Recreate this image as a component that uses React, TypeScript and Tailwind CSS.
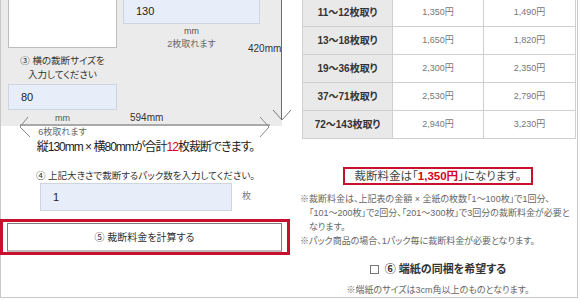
import React from 'react';

const rows = [
  ['11〜12枚取り', '1,350円', '1,490円'],
  ['13〜18枚取り', '1,650円', '1,820円'],
  ['19〜36枚取り', '2,300円', '2,350円'],
  ['37〜71枚取り', '2,530円', '2,790円'],
  ['72〜143枚取り', '2,940円', '3,230円'],
];

const SizeInput: React.FC<{ value: string; className: string }> = ({ value, className }) => (
  <div className={`flex items-center pl-[12px] bg-[#e7edf9] border border-[#cdd5e3] text-[11px] text-[#222] ${className}`}>
    {value}
  </div>
);

const App: React.FC = () => {
  return (
    <div className="w-[580px] h-[300px] overflow-hidden bg-white text-[#333] font-['Liberation_Sans','Noto_Sans_CJK_JP',sans-serif] [font-feature-settings:'palt']">
      <div className="flex w-[578px] h-[298px] border-l border-r border-b border-[#c8c8c8]">
        {/* left: paper diagram + inputs */}
        <div className="w-[289px] shrink-0 flex flex-col">
          <div className="relative -mt-[14px] h-[140px] w-[281px] bg-[#ebebeb]">
            <div className="flex pl-[7px] pt-[4px]">
              <div className="w-[109px] flex flex-col">
                <div className="h-[58px] bg-white border border-[#bdbdbd]" />
                <div className="mt-[6px] text-center text-[9.5px] leading-[14px] text-[#333]">
                  ③ 横の裁断サイズを
                  <br />
                  入力してください
                </div>
                <SizeInput value="80" className="mt-[2px] h-[26px]" />
                <div className="mt-[2px] text-center text-[9px] leading-[12px] text-[#555]">mm</div>
              </div>
              <div className="ml-[6px] w-[137px] pt-[8px] flex flex-col">
                <SizeInput value="130" className="h-[26px]" />
                <div className="mt-[1px] text-center text-[9px] leading-[12px] text-[#555]">mm</div>
                <div className="mt-[1px] text-center text-[9px] leading-[12px] text-[#666]">2枚取れます</div>
              </div>
            </div>

            {/* dimension arrows */}
            <div className="absolute left-[247px] top-[57px] text-[10px] leading-[12px] font-medium text-[#333]">420mm</div>
            <div className="absolute left-[280px] top-0 w-px h-[134px] bg-[#6b6b6b]" />
            <svg className="absolute left-[270px] top-[123px] w-[22px] h-[12px]" viewBox="0 0 22 12" fill="none" stroke="#777" strokeWidth="1">
              <path d="M2 1 L11 11 L20 1" />
            </svg>
            <div className="absolute left-[19px] bottom-0 w-[250px] h-[2px] bg-[#a9a9a9]" />
            <svg className="absolute left-[16px] top-[129px] w-[14px] h-[24px]" viewBox="0 0 14 24" fill="none" stroke="#888" strokeWidth="1">
              <path d="M11 2 L3 12 L13 22" />
            </svg>
            <svg className="absolute left-[256px] top-[129px] w-[14px] h-[24px]" viewBox="0 0 14 24" fill="none" stroke="#888" strokeWidth="1">
              <path d="M3 2 L12 12 L3 22" />
            </svg>
            <div className="absolute left-[129px] top-[126px] text-[10px] leading-[12px] font-medium text-[#333]">594mm</div>
          </div>

          <div className="pl-[7px]">
            <div className="w-[109px] text-center text-[9px] leading-[12px] text-[#666]">6枚取れます</div>
          </div>

          <div className="mt-[1px] text-center text-[12px] leading-[16px] text-[#222] tracking-[-1px]">
            縦130mm × 横80mmが合計<span className="text-[#d0021b]">12</span>枚裁断できます。
          </div>

          <div className="mt-[14px] text-center text-[9.5px] leading-[14px] text-[#333]">
            ④ 上記大きさで裁断するパック数を入力してください。
          </div>

          <div className="flex items-center pl-[39px]">
            <SizeInput value="1" className="w-[192px] h-[28px]" />
            <span className="ml-[10px] text-[9px] text-[#777]">枚</span>
          </div>

          <div className="mt-[8px] -ml-px w-[290px] border-[3px] border-[#c8102e] pt-px pl-[4px] pr-[5px]">
            <button className="w-full h-[29px] bg-white border border-[#7d7d7d] border-b-2 border-b-[#bdbdbd] text-[10px] text-[#333]">
              ⑤ 裁断料金を計算する
            </button>
          </div>
        </div>

        {/* right: price table + notes */}
        <div className="flex-1 flex flex-col pl-[10px] pr-[2px]">
          <div className="-mt-[2px] ml-[2px] border-t border-l border-[#cfcfcf]">
            {rows.map((r) => (
              <div key={r[0]} className="grid grid-cols-[90px_91px_92px] h-[28px] border-b border-[#cfcfcf]">
                <div className="flex items-center justify-center bg-[#e9e9e9] border-r border-[#cfcfcf] text-[10px] font-bold text-[#333]">
                  {r[0]}
                </div>
                <div className="flex items-center justify-center border-r border-[#cfcfcf] text-[9px] text-[#777]">{r[1]}</div>
                <div className="flex items-center justify-center border-r border-[#cfcfcf] text-[9px] text-[#777]">{r[2]}</div>
              </div>
            ))}
          </div>

          <div className="mt-[28px] flex justify-center">
            <div className="h-[18px] px-[10px] flex items-center border-2 border-[#c8102e] text-[11.5px] leading-[14px] text-[#444]">
              裁断料金は「<span className="font-bold text-[#d9001b]">1,350円</span>」になります。
            </div>
          </div>

          <div className="mt-[7px] text-[9px] leading-[14px] text-[#666] whitespace-nowrap">
            <p className="pl-[9px] indent-[-9px]">
              ※裁断料金は、上記表の金額 × 全紙の枚数「1～100枚」で1回分、
              <br />
              「101～200枚」で2回分、「201～300枚」で3回分の裁断料金が必要と
              <br />
              なります。
            </p>
            <p>※パック商品の場合、1パック毎に裁断料金が必要となります。</p>
          </div>

          <div className="mt-[13px] h-[16px] flex items-center justify-center">
            <span className="w-[9px] h-[9px] border border-[#777] bg-white" />
            <span className="ml-[6px] text-[11px] font-bold text-[#333]">⑥ 端紙の同梱を希望する</span>
          </div>

          <div className="mt-[7px] text-center text-[9px] leading-[12px] text-[#666]">
            ※端紙のサイズは3cm角以上のものとなります。
          </div>
        </div>
      </div>
    </div>
  );
};

export default App;
